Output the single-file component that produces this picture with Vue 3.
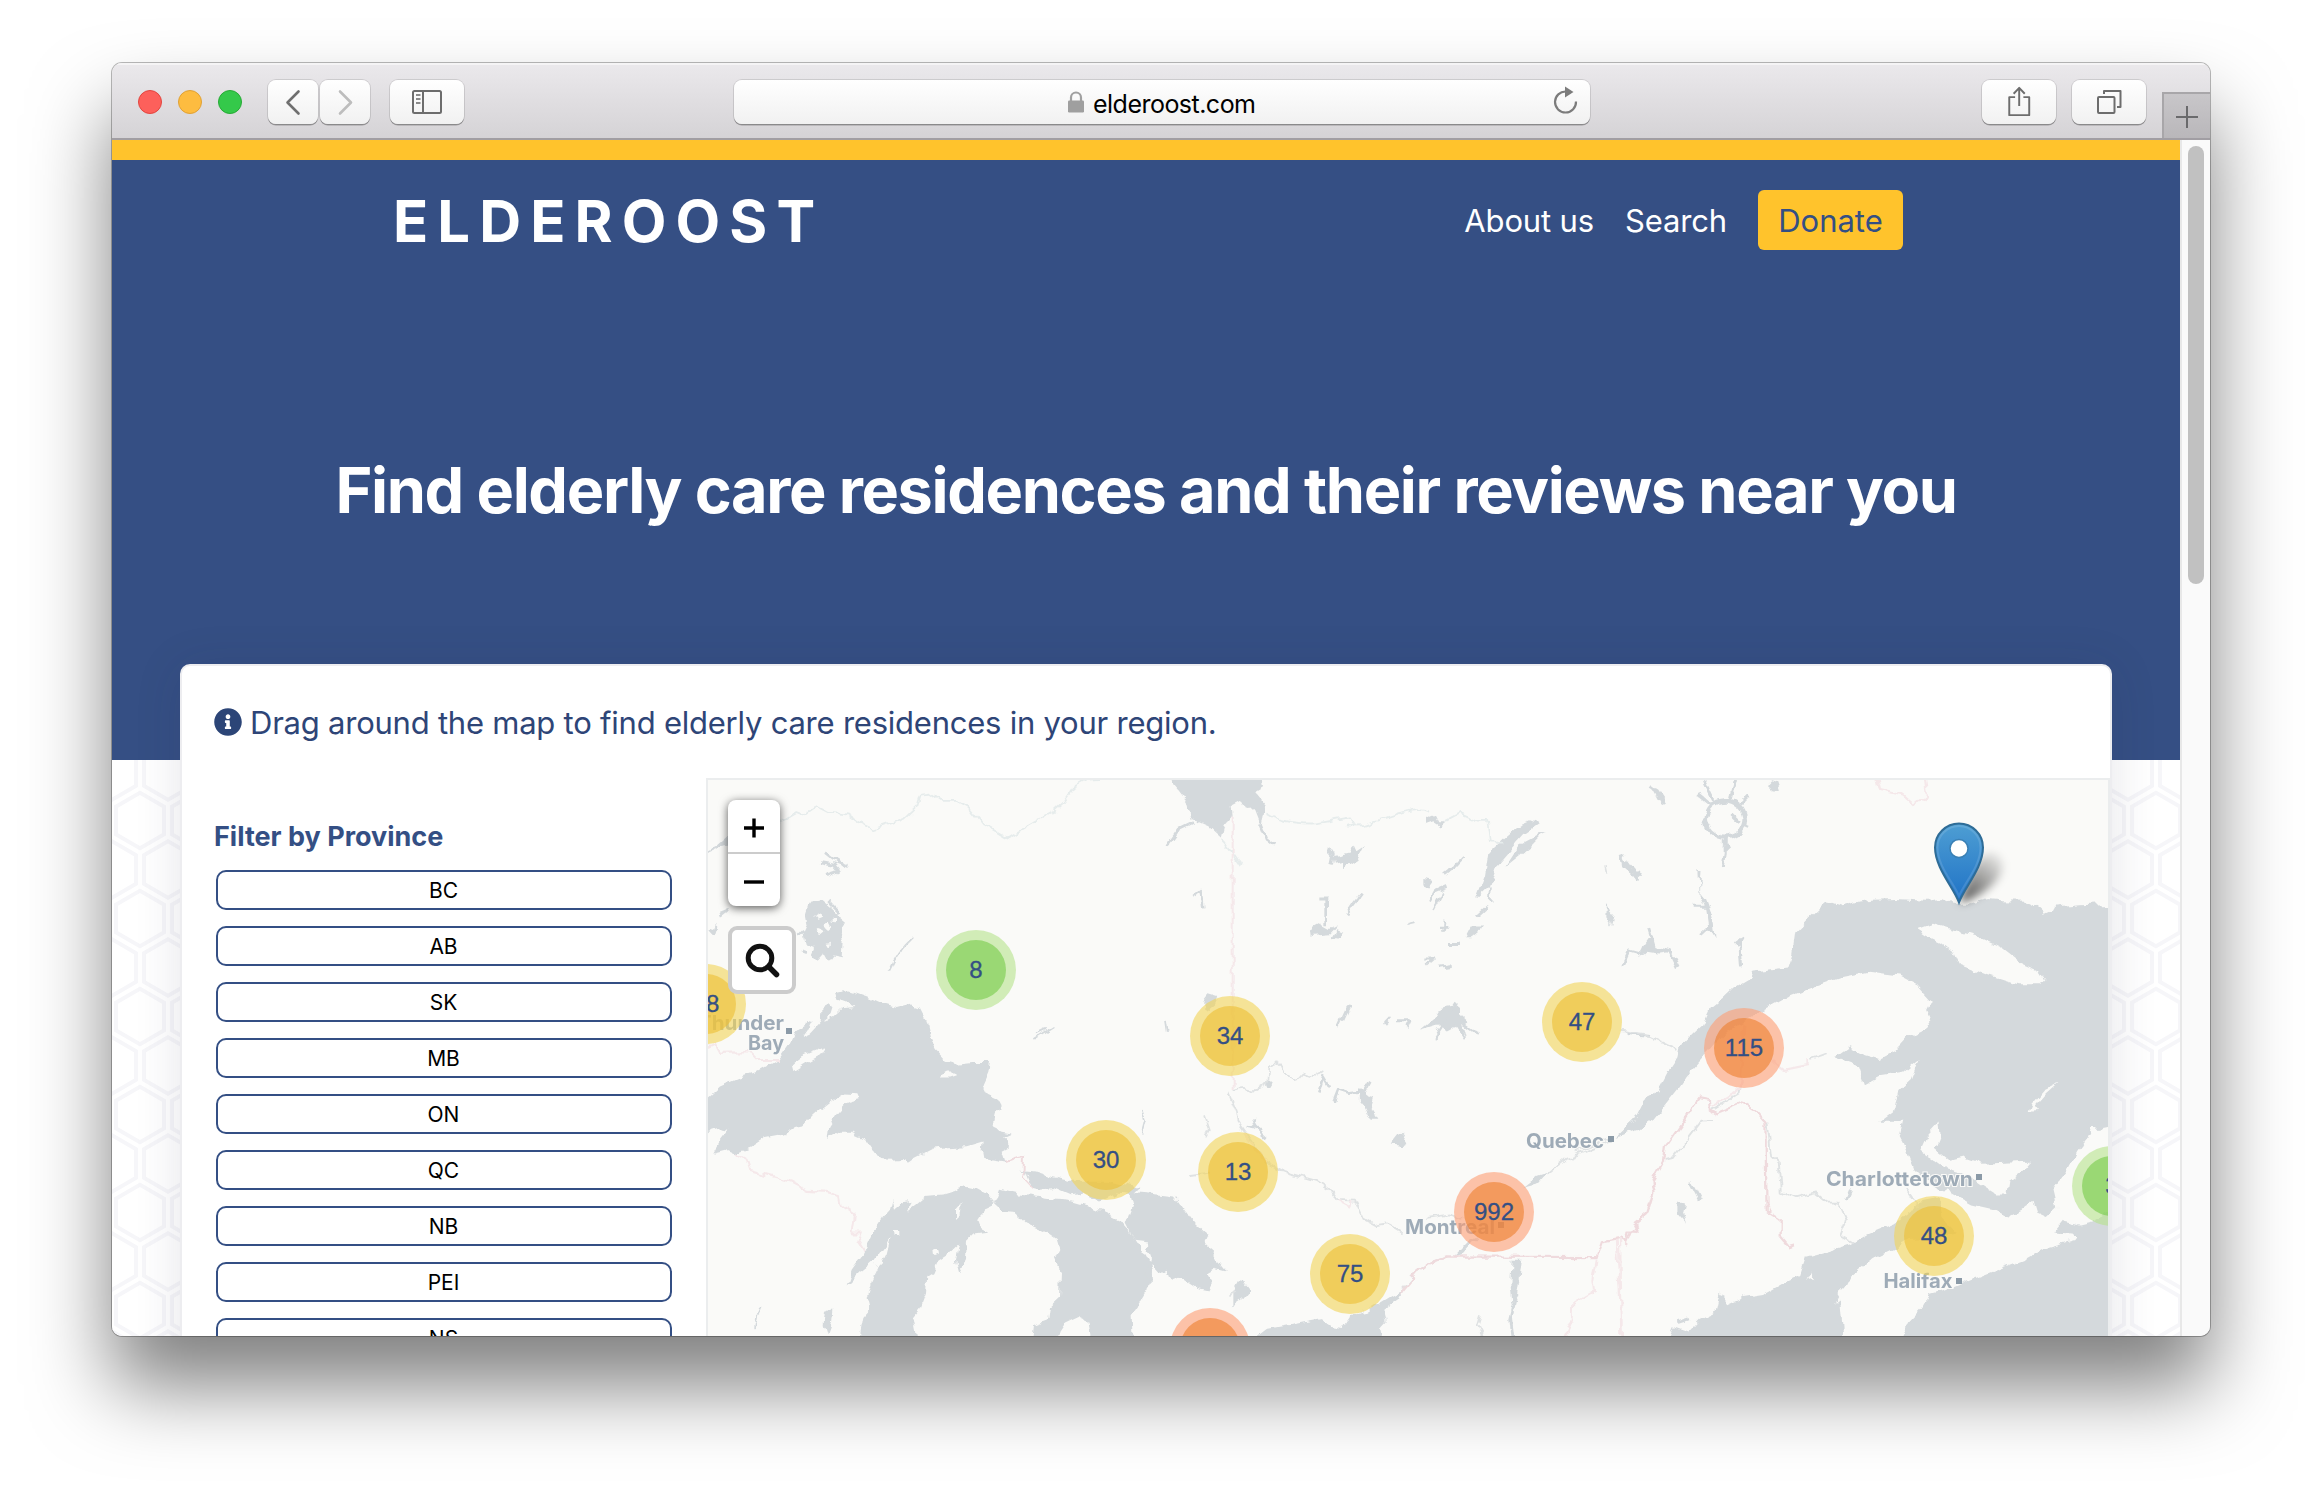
<script setup>
const provinces = ['BC', 'AB', 'SK', 'MB', 'ON', 'QC', 'NB', 'PEI', 'NS']

// Cluster centres in map pixels
const clusters = [
  { n: '18', x: -2, y: 224, size: 'medium' },
  { n: '8', x: 268, y: 190, size: 'small' },
  { n: '34', x: 522, y: 256, size: 'medium' },
  { n: '30', x: 398, y: 380, size: 'medium' },
  { n: '13', x: 530, y: 392, size: 'medium' },
  { n: '75', x: 642, y: 494, size: 'medium' },
  { n: '992', x: 786, y: 432, size: 'large' },
  { n: '47', x: 874, y: 242, size: 'medium' },
  { n: '115', x: 1036, y: 268, size: 'large' },
  { n: '48', x: 1226, y: 456, size: 'medium' },
  { n: '3', x: 1404, y: 406, size: 'small' },
  { n: '', x: 502, y: 568, size: 'large' }
]

const cities = [
  { name: 'Thunder', x: 698, y: 1030, w: 86, dot: [789, 1031] },
  { name: 'Bay', x: 748, y: 1050, w: 36 },
  { name: 'Quebec', x: 1526, y: 1147.5, w: 78, dot: [1611, 1139] },
  { name: 'Montreal', x: 1405, y: 1233.5, w: 90, dot: [1501, 1225] },
  { name: 'Charlottetown', x: 1826, y: 1185.5, w: 147, dot: [1979, 1177] },
  { name: 'Halifax', x: 1883.5, y: 1287.5, w: 69, dot: [1959, 1281] }
]
</script>

<template>
  <div class="desktop">
    <div class="window">
      <div class="toolbar">
        <div class="lights">
          <i class="light red"></i><i class="light amber"></i><i class="light green"></i>
        </div>
        <div class="navs">
          <span class="tb nav-btn">
            <svg width="50" height="44" viewBox="0 0 50 44"><path d="M30.5 11.5 19.5 22.500l11 11" fill="none" stroke="#6f6f6f" stroke-width="2.600" stroke-linecap="round" stroke-linejoin="round" /></svg>
          </span>
          <span class="tb nav-btn">
            <svg width="50" height="44" viewBox="0 0 50 44"><path d="M20 11.500l11 11-11 11" fill="none" stroke="#bdbdbd" stroke-width="2.600" stroke-linecap="round" stroke-linejoin="round" /></svg>
          </span>
        </div>
        <span class="tb side-btn">
          <svg width="74" height="44" viewBox="0 0 74 44" fill="none" stroke="#6d6d6d" stroke-width="2">
            <rect x="23" y="11" width="28" height="22" rx="1.500" />
            <path d="M33 11v22" />
            <path d="M26 15h4.500M26 19h4.500M26 23h4.500" stroke="#8a8a8a" />
          </svg>
        </span>
        <div class="tb address">
          <svg class="lock" width="18" height="22" viewBox="0 0 18 22"><path d="M4 10V6.500a5 5 0 0 1 10 0V10" fill="none" stroke="#a0a0a0" stroke-width="2.200" /><rect x="1" y="9.500" width="16" height="12" rx="1.200" fill="#9f9f9f" /></svg>
          <span class="url">elderoost.com</span>
          <svg class="reload" width="26" height="30" viewBox="0 0 26 30"><path d="M23 16.500A10.500 10.500 0 1 1 13 6.500" fill="none" stroke="#7c7c7c" stroke-width="2.200" /><path d="M12 1.500l8.500 5.500L12 12.500z" fill="#7c7c7c" /></svg>
        </div>
        <span class="tb share-btn">
          <svg width="76" height="44" viewBox="0 0 76 44" fill="none" stroke="#6d6d6d" stroke-width="2" stroke-linejoin="round"><path d="M34 17h-6v18.500h20.500V17h-6" /><path d="M38.200 26V8M32.500 13.500l5.700-6 5.700 6" /></svg>
        </span>
        <span class="tb tabs-btn">
          <svg width="74" height="44" viewBox="0 0 74 44" fill="none" stroke="#6d6d6d" stroke-width="2" stroke-linejoin="round"><rect x="26" y="17" width="16.500" height="16" rx="1" /><path d="M32 14v-3h16.500v16H45" /></svg>
        </span>
        <span class="new-tab">
          <svg width="46" height="46" viewBox="0 0 46 46"><path d="M12 23h22M23 12v22" stroke="#6a6a6c" stroke-width="2" /></svg>
        </span>
      </div>

      <div class="viewport">
        <div class="page">
          <svg class="hex" width="2068" height="1196">
            <defs>
              <pattern id="hexagons" width="28" height="49" patternUnits="userSpaceOnUse" patternTransform="translate(0 534) scale(2)">
                <path fill="#f6f6f9" fill-rule="evenodd" d="M13.990 9.250l13 7.500v15l-13 7.500L1 31.750v-15l12.990-7.500zM3 17.900v12.700l10.990 6.340 11-6.350V17.900l-11-6.340L3 17.900zM0 15l12.980-7.500V0h-2v6.350L0 12.690v2.300zm0 18.500L12.980 41v8h-2v-6.850L0 35.810v-2.300zM15 0v7.500L27.990 15H28v-2.310h-.01L17 6.350V0h-2zm0 49v-8l12.990-7.500H28v2.310h-.01L17 42.150V49h-2z" />
              </pattern>
            </defs>
            <rect width="2068" height="1196" fill="url(#hexagons)" />
          </svg>

          <header class="hero">
            <nav class="nav">
              <span class="logo">ELDEROOST</span>
              <a class="link">About us</a>
              <a class="link">Search</a>
              <a class="donate">Donate</a>
            </nav>
            <h1>Find elderly care residences and their reviews near you</h1>
          </header>

          <main class="card">
            <p class="hint">
              <svg width="28" height="28" viewBox="4 4 504 504"><path fill="#2c4577" d="M256 8C119.043 8 8 119.083 8 256c0 136.997 111.043 248 248 248s248-111.003 248-248C504 119.083 392.957 8 256 8zm0 110c23.196 0 42 18.804 42 42s-18.804 42-42 42-42-18.804-42-42 18.804-42 42-42zm56 254c0 6.627-5.373 12-12 12h-88c-6.627 0-12-5.373-12-12v-24c0-6.627 5.373-12 12-12h12v-64h-12c-6.627 0-12-5.373-12-12v-24c0-6.627 5.373-12 12-12h64c6.627 0 12 5.373 12 12v100h12c6.627 0 12 5.373 12 12v24z" /></svg>
              <span>Drag around the map to find elderly care residences in your region.</span>
            </p>
            <div class="body">
              <aside class="filters">
                <h4>Filter by Province</h4>
                <button v-for="p in provinces" :key="p">{{ p }}</button>
              </aside>

              <div class="map">
                <svg class="tiles" width="1400" height="556" viewBox="708 780 1400 556">
                  <defs>
                    <filter id="coast" x="0" y="0" width="100%" height="100%">
                      <feTurbulence type="fractalNoise" baseFrequency="0.09" numOctaves="2" seed="4" result="n" />
                      <feDisplacementMap in="SourceGraphic" in2="n" scale="9" xChannelSelector="R" yChannelSelector="G" />
                      <feGaussianBlur stdDeviation="0.6" />
                    </filter>
                    <filter id="soft"><feGaussianBlur stdDeviation="0.500" /></filter>
                  </defs>
                  <g filter="url(#coast)">
                    <rect x="700" y="770" width="1420" height="580" fill="#fafaf8" />
                    <!-- Upper Great Lakes -->
                    <g transform="translate(700 770) scale(.33333 .36351)">
                      <g class="water">
                        <path d="M0 915L24 898 60 868 110 848 165 832 205 812 240 792 265 760 285 720 320 700 338 688 325 712 305 735 330 725 365 690 368 650 380 635 398 650 390 675 370 690 400 680 430 655 465 652 440 640 410 630 405 608 430 603 460 612 500 625 540 642 590 655 630 645 660 655 680 690 690 730 710 770 740 800 775 808 820 803 870 803 865 830 848 865 860 888 890 900 905 925 890 950 882 985 905 995 935 1000 910 1010 928 1035 908 1045 920 1080 885 1075 850 1070 845 1045 848 1022 800 1035 740 1038 700 1042 640 1070 625 1080 600 1070 570 1072 540 1070 520 1045 495 1012 455 995 415 995 380 1015 385 980 410 945 440 915 478 905 472 892 430 890 395 910 360 935 335 955 310 980 285 985 255 1003 195 1013 150 1040 105 1057 75 1045 40 1053 60 1020 85 990 60 985 24 995 0 1000Z" />
                        <path d="M330 365L365 358 400 385 415 405 435 420 420 440 428 470 425 515 400 510 385 530 370 505 350 525 335 510 345 490 318 480 310 445 322 420 318 400Z" />
                        <path d="M440 1418L455 1375 490 1330 520 1270 545 1235 570 1210 578 1180 585 1210 610 1190 638 1185 620 1215 650 1195 680 1172 730 1168 765 1158 790 1143 830 1150 860 1165 885 1192 855 1205 835 1235 840 1260 862 1270 820 1275 798 1295 795 1345 775 1382 765 1350 775 1305 740 1335 715 1350 700 1382 682 1392 678 1440 662 1480 640 1505 655 1580H475L490 1505 512 1482 503 1450 515 1410 535 1372 522 1350 510 1360 475 1385Z" />
                        <path d="M885 1192L900 1155 960 1168 1000 1172 1050 1178 1110 1182 1160 1195 1220 1220 1260 1238 1290 1270 1310 1300 1335 1335 1358 1375 1350 1420 1318 1470 1295 1500 1298 1580H1176L1165 1520 1130 1505 1095 1520 1068 1557 1060 1580H995L1002 1525 1045 1510 1050 1475 1080 1450 1083 1380 1065 1340 1078 1315 1070 1290 1030 1265 975 1245 940 1215 910 1213Z" />
                        <path d="M955 1100L1010 1105 1060 1120 1110 1130 1220 1130 1320 1150 1300 1170 1250 1165 1200 1187 1150 1165 1110 1170 1060 1150 1020 1155 1000 1150 985 1115Z" />
                        <path d="M0 222L24 218 50 205 84 178 90 208 50 214 24 225ZM60 390l22-8 5 10-20 14zM24 440l26-14-10 30zM375 1490l22-6-4 40-12 30-10-30z" />
                      </g>
                      <g class="streams">
                        <path d="M375 230L410 255 445 268M360 255L400 262 420 285M375 293L425 278M385 360L415 390M300 500L315 505M310 440L295 455" />
                        <path d="M565 555Q590 500 637 460M1000 740L1060 705M1005 725L1035 712M1325 935L1335 965 1325 1000M1395 690L1400 720M165 1535L172 1500 182 1478" class="fine" />
                        <path d="M240 145L290 118 310 125 350 100 385 117 440 122 480 147 520 163 560 150 620 130 655 100 665 68 690 65 720 85 770 85 810 105 850 150 920 188 1000 145 1060 115 1090 90 1120 50 1160 30 1200 28" class="river" />
                      </g>
                      <g class="land">
                        <path d="M275 810L300 790 340 775 375 763 360 785 320 805 280 828ZM720 840l15-8 30 0 6 8-20 6-28 0zM522 1352L545 1320 572 1285 560 1330 537 1372ZM768 1235l0-25 17-18-2 30zM340 405l18-8 5 12-14 6zM372 425l14-12 8 14-12 10zM352 440l10-6 8 10-10 8zM395 405l10 2 0 12-10-2zM380 475l14-2-6 14zM582 1268l16 0 0 14-14 0zM700 1318l12 0 2 12-12 4z" />
                      </g>
                      <g class="border">
                        <path d="M24 762L45 752 60 778 150 776 170 795 240 795M105 1057L140 1075 150 1102 220 1120 270 1132 325 1158 370 1160 420 1172 425 1195 465 1220 458 1275 485 1275 475 1300 492 1325" />
                        <path d="M918 1078L940 1070 972 1065 970 1120 1000 1150" class="strong" />
                      </g>
                    </g>
                    <!-- Ontario and Quebec -->
                    <g transform="translate(1150 770) scale(.33333 .36351)">
                      <g class="water">
                        <path d="M45 10L80 50 110 85 125 135 175 155 215 188 225 150 248 125 245 100 275 85 290 110 315 108 335 155 345 100 315 65 342 50 335 10Z" />
                        <path d="M-60 1160L0 1165 75 1173 95 1200 130 1245 160 1270 178 1280 165 1305 190 1325 205 1355 228 1380 195 1372 170 1385 188 1410 175 1432 140 1425 90 1395 60 1405 50 1375 30 1385 5 1360 5 1410 -15 1395 0 1345 -10 1320 0 1300 -45 1295 -70 1250 -50 1200Z" />
                        <path d="M290 1580L350 1538 430 1525 515 1510 545 1530 575 1535 600 1500 650 1490 665 1480 720 1450 760 1430 745 1455 700 1485 710 1520 690 1540 700 1580Z" />
                        <path d="M250 1475l0-38 20-35 28 33-18 20zM1510 895L1480 910 1450 965 1410 1000 1390 1010 1415 1005 1460 990 1510 962ZM1120 1147l40-28 28-8-20 22-34 8zM985 1285l-30 12-42 40 25-5z" />
                        <path d="M978 355L1005 290 1015 230 1060 190 1110 150 1140 138 1168 148 1120 178 1075 225 1040 262 1020 320ZM1068 265L1110 205 1187 168 1140 212Z" />
                        <path d="M550 240l50-10 10-25 10 20 25-15-20 35-45 25-5-20-20 5zM480 440l30-15 30 15 22-10-20 22-60 5zM545 465l15-25 20 8-25 18zM945 460l20-35 30 0-10 20-20 15zM810 715l40-30 20-30 60-10 0 30 25 20-15 5 10 35-30-30-30 15-25-20zM625 880l30 20 20 5-10 30 20 30-20 0-20-35-18-20zM820 300l30 5-15 18-15-5zM825 135l30-12 10 18 20 0-15 12-20-12-25 8zM725 1030l30-35 20 30-20 10zM160 635l15-18 30 8-10 20-20 15-15-5zM345 860l32 0-10 15-15 0zM1085 1350l30 0-6 50-8 50-14 20-6-60zM1368 365l10 25 10 10-8 25-14-20z" />
                      </g>
                      <g class="streams">
                        <path d="M130 145L85 165 50 210M530 355L530 430M505 355L535 355M588 400L610 370 635 340M535 215L550 235 545 260M290 980L320 985 350 1010M310 955L320 990M130 350L155 330 160 375M330 150L345 185 375 207M1415 230L1420 265 1450 290 1480 280M1440 260L1470 290M1095 1460L1082 1510 1090 1570M885 285L915 265 940 240M980 405L1010 380M1025 320L1020 360M820 520L850 520 825 540M870 540L905 535M870 430L895 430M885 415L880 445M775 425L800 420M900 480L925 480M565 710L590 660 603 650M705 695L720 680M735 690L780 690 770 710M835 360L850 335 890 320M850 385L880 335M505 890L520 840 540 870M550 915L565 880 600 890 640 885 658 855M920 640L850 740M930 690L990 728M910 690L945 740M1430 725L1500 730" />
                        <path d="M350 118Q400 150 500 147L600 130 615 150 590 153 640 152 760 115Q810 100 840 115M885 140L930 118 985 140 1015 140 1023 200 1060 200M215 188L245 225 275 265" class="river" />
                        <path d="M250 880Q280 868 315 882L355 860 358 820Q380 790 400 830L440 855 460 835 490 845 520 828M235 885L260 940 265 970 350 1080 400 1105 500 1130 540 1155 560 1180 615 1182 640 1235 680 1255 715 1250 755 1272M120 1112L180 1105M395 1105L350 1080M755 1430L800 1385 850 1350 890 1338M830 1235L900 1225 940 1235M1385 1020L1250 1070 1190 1115M1385 1010L1280 1050M990 1500L980 1530 995 1557M165 950L180 990 170 1008M1365 265L1370 285M235 1445L260 1435" class="river dark" />
                      </g>
                      <g class="border">
                        <path d="M248 125V880M280 1000L350 1080M560 1180L600 1200 605 1180M1340 1345L1330 1400 1335 1430 1270 1465 1268 1510 1240 1570M1400 1290L1410 1450 1415 1570" />
                        <path d="M750 1440L800 1385 850 1350 890 1338 1340 1340 1355 1300 1410 1290 1430 1300 1445 1265 1460 1270 1455 1245 1490 1220 1500 1190" class="strong" />
                      </g>
                    </g>
                    <!-- Gulf of St. Lawrence and the Maritimes -->
                    <g transform="translate(1620 770) scale(.38265 .36351)">
                      <g class="water">
                        <path d="M0 1005L20 980 50 950 65 905 95 890 125 830 150 790 155 765 185 730 215 700 235 655 270 625 300 595 340 570 345 555 440 543 450 510 458 450 490 415 530 375 545 362 580 375 620 362 660 357 720 355 800 360 840 355 870 368 910 368 960 355 1000 358 1060 360 1090 375 1110 393 1140 378 1200 372 1300 368V980L1255 990 1240 972 1225 1010 1195 1050 1170 1100 1130 1155 1140 1200 1110 1230 1090 1220 1080 1185 1050 1210 1015 1228 980 1210 920 1195 860 1160 830 1150 800 1130 770 1100 755 1060 745 1030 730 1000 738 965 675 965 720 930 730 880 760 850 780 795 740 830 680 840 640 862 625 815 560 790 600 760 640 785 675 795 720 770 750 735 800 710 812 690 800 660 812 635 775 590 730 565 650 555 580 570 500 600 440 625 380 660 330 690 280 720 220 790 170 850 150 880 90 960 50 990Z" />
                        <path d="M120 1580L140 1530 180 1545 210 1510 250 1490 260 1440 280 1470 320 1450 380 1440 430 1410 470 1390 485 1340 520 1330 600 1305 650 1275 720 1245 760 1215 780 1185 830 1175 840 1230 880 1275 820 1285 760 1290 720 1315 660 1345 600 1395 575 1450 585 1580Z" />
                        <path d="M725 1580L750 1520 790 1475 805 1445 840 1435 900 1410 960 1385 1060 1345 1110 1315 1195 1290 1180 1275 1135 1272 1160 1240 1200 1250 1240 1240 1300 1205V1580Z" />
                        <path d="M385 40l10-12 15 5 8 25-20-5zM205 275l8 0-4 60 16 20 20 60 5 48-20-35-8-55-14-30zM60 490l20-30 10 25 40 15-30 5-30-5-20 12zM150 1190l20 5-5 25 10 28-25-30zM80 50l15 0 25 40-15 8z" />
                      </g>
                      <g class="streams">
                        <circle cx="275" cy="135" r="51" stroke-width="12" />
                        <path d="M275 190L275 225 270 270M235 95L200 65M245 85L220 30M290 80L302 30M315 95L338 70M320 150L338 158M265 195L285 215M290 125L310 145M0 235L25 280 60 285M15 250L50 300M5 540L25 495 60 505 80 485 130 500 150 543M90 490L75 435M310 465L315 540M300 480L320 465M210 455L235 430M105 70L75 45M185 1135L210 1185M590 1180L600 1155M245 1510L270 1450M290 1500L320 1450M150 1520L180 1510M345 1470L380 1440M190 375L225 375" />
                        <path d="M0 718L60 725 100 745 150 770M385 970L395 1060 415 1080 420 1160 460 1178 510 1165 540 1190 570 1190 590 1240 575 1280 610 1300M240 935L310 890 315 860M245 960L215 962 140 1065 120 1070M750 1155L780 1200M500 795L545 778" class="river dark" />
                      </g>
                      <g class="land">
                        <path d="M775 438L815 423 860 437 940 460 1000 490 1050 530 1095 550 1112 578 1100 592 1040 592 960 565 885 535 870 500 840 475 800 455Z" />
                        <path d="M835 970L838 1010 825 1045 860 1075 900 1065 950 1083 1020 1080 1072 1078 1050 1105 1015 1130 1010 1165 980 1165 950 1145 900 1110 850 1095 825 1075 785 1045 800 1010ZM487 1405l12-28 14 28-12-5zM560 1470l15-35 40-40 45-22-40 38-35 35z" />
                        <path d="M1145 862L1130 870 1108 882 1078 918 1070 940 1095 938 1085 925 1110 895Z" />
                      </g>
                      <g class="border">
                        <path d="M670 10L680 55 740 70 770 98 802 70 795 10M325 700L315 860 310 880 240 925M400 800L430 825 490 812 490 795M0 1285L5 1580" />
                        <path d="M0 1285L15 1300 20 1270 45 1270 35 1250 75 1215 90 1160 85 1130 115 1075 120 1035 210 900 232 905 235 935 250 945 320 915 350 935 380 970 383 1210 420 1235 420 1285 440 1310 460 1305" class="strong" />
                      </g>
                    </g>
                  </g>
                  <g class="labels" filter="url(#soft)">
                    <g v-for="c in cities" :key="c.name">
                      <text :x="c.x" :y="c.y" :textLength="c.w" lengthAdjust="spacingAndGlyphs">{{ c.name }}</text>
                      <rect v-if="c.dot" :x="c.dot[0] - 3" :y="c.dot[1] - 3" width="6" height="6" />
                    </g>
                  </g>
                </svg>

                <div v-for="c in clusters" :key="c.n" class="cluster" :class="c.size" :style="{ left: c.x - 40 + 'px', top: c.y - 40 + 'px' }">
                  <span>{{ c.n }}</span>
                </div>

                <svg class="pin" width="130" height="100" viewBox="0 0 130 100">
                  <defs>
                    <linearGradient id="pinFill" x1="0" y1="0" x2="0" y2="1">
                      <stop offset="0" stop-color="#4e9ed3" />
                      <stop offset="1" stop-color="#1f72c6" />
                    </linearGradient>
                    <linearGradient id="pinShade" x1="0" y1="1" x2="0.700" y2="0">
                      <stop offset="0" stop-color="#000" stop-opacity=".7" />
                      <stop offset="1" stop-color="#000" stop-opacity=".1" />
                    </linearGradient>
                    <filter id="pinBlur" x="-30%" y="-30%" width="160%" height="160%"><feGaussianBlur stdDeviation="4.500" /></filter>
                  </defs>
                  <path d="M36 83C42 62 50 40 64 33c16-1 19 16 8 28C62 72 48 80 36 83z" fill="url(#pinShade)" filter="url(#pinBlur)" />
                  <path d="M35 82.500C30 68 11 48 11 27.500a24 24 0 0 1 48 0C59 48 40 68 35 82.500z" fill="url(#pinFill)" stroke="#2e6c97" stroke-width="2" />
                  <path d="M35 76C29 62 13.500 46 13.500 27.500a21.500 21.500 0 0 1 43 0C56.500 46 41 62 35 76z" fill="none" stroke="#fff" stroke-opacity=".12" stroke-width="2" />
                  <circle cx="35" cy="28.500" r="9" fill="#fff" stroke="#3a80b5" stroke-width="1.500" />
                </svg>

                <div class="zoom">
                  <span><svg width="20" height="20" viewBox="0 0 20 20"><path d="M0 10h20M10 0.500v19" stroke="#000" stroke-width="3.400" /></svg></span>
                  <span><svg width="20" height="20" viewBox="0 0 20 20"><path d="M0 10h20" stroke="#000" stroke-width="3.400" /></svg></span>
                </div>
                <div class="search">
                  <svg width="60" height="60" viewBox="0 0 60 60" fill="none" stroke="#111"><circle cx="28" cy="28" r="11.800" stroke-width="5" /><path d="M37 37l7.500 7.500" stroke-width="5.500" stroke-linecap="round" /></svg>
                </div>
              </div>
            </div>
          </main>
        </div>
        <div class="scrollbar"><i></i></div>
      </div>
    </div>
  </div>
</template>

<style>
html, body { margin: 0; background: #fff; overflow: hidden; }
</style>

<style scoped>
.desktop {
  width: 2322px;
  height: 1496px;
  box-sizing: border-box;
  padding: 63px 112px 160px;
  overflow: hidden;
  font-family: Inter, "Liberation Sans", sans-serif;
}
.window {
  width: 2098px;
  height: 1273px;
  border-radius: 10px;
  overflow: hidden;
  background: #fff;
  box-shadow: 0 0 0 1px rgba(0, 0, 0, 0.27), 0 50px 80px rgba(0, 0, 0, 0.5);
}
.toolbar {
  display: flex;
  align-items: flex-start;
  height: 77px;
  box-sizing: border-box;
  padding: 17px 0 0 26px;
  border-bottom: 2px solid #a19ea3;
  background: linear-gradient(#ebe9ec, #d5d3d6);
  box-shadow: inset 0 2px 0 #f5f4f5;
}
.lights { display: flex; gap: 16px; padding-top: 10px; width: 130px; }
.light { width: 24px; height: 24px; border-radius: 50%; box-sizing: border-box; border: 1px solid; }
.red { background: #fd605b; border-color: #e2453f; }
.amber { background: #fdbc40; border-color: #e0a135; }
.green { background: #34c94a; border-color: #27aa35; }
.tb {
  height: 44px;
  border-radius: 8px;
  background: linear-gradient(#fff, #f1f1f1);
  box-shadow: 0 0 0 1px rgba(0, 0, 0, 0.11), 0 1.500px 0 rgba(0, 0, 0, 0.28);
  display: flex;
}
.navs { display: flex; gap: 2px; }
.nav-btn { width: 50px; }
.side-btn { width: 74px; margin-left: 20px; }
.address { width: 856px; margin-left: 270px; align-items: center; position: relative; }
.lock { margin-left: 333px; margin-top: -1px; }
.url { margin-left: 8px; font-size: 25px; letter-spacing: -0.52px; color: #000; margin-top: 3px; }
.reload { position: absolute; right: 11px; top: 5px; }
.share-btn { width: 74px; margin-left: 392px; }
.tabs-btn { width: 74px; margin-left: 16px; }
.new-tab {
  width: 46px;
  height: 44px;
  margin-left: 16px;
  margin-top: 12px;
  border-left: 2px solid #a8a6a9;
  border-top: 2px solid #a8a6a9;
  background: linear-gradient(#c8c6c9, #b9b7ba);
}
.viewport { display: flex; height: 1196px; }
.page { width: 2068px; height: 1196px; overflow: hidden; position: relative; background: #fff; }
.hex { position: absolute; left: 0; top: 0; }
.hero {
  position: relative;
  height: 620px;
  box-sizing: border-box;
  border-top: 20px solid #ffc32c;
  background: #354f84;
  color: #fff;
  padding-top: 30px;
}
.nav { display: flex; align-items: center; height: 60px; padding: 0 277px 0 281px; }
.logo { font-size: 58px; font-weight: 700; letter-spacing: 9.100px; margin-right: auto; padding-top: 2px; }
.link { font-size: 31px; margin-right: 31px; letter-spacing: -0.150px; }
.donate {
  width: 145px;
  height: 60px;
  line-height: 61px;
  border-radius: 6px;
  background: #ffc32c;
  color: #344f84;
  font-size: 31px;
  text-align: center;
}
h1 {
  margin: 202px 0 0;
  line-height: 76px;
  font-size: 63px;
  font-weight: 700;
  letter-spacing: -1.360px;
  text-align: center;
  white-space: nowrap;
}
.card {
  position: relative;
  width: 1928px;
  height: 900px;
  margin: -96px 0 0 68px;
  border: 2px solid #ededf0;
  border-radius: 10px;
  background: #fff;
  box-shadow: 0 4px 48px rgba(40, 42, 70, 0.12);
}
.hint {
  display: flex;
  align-items: center;
  margin: 0;
  padding: 35px 0 35px 32px;
  height: 42px;
  color: #2e4577;
  font-size: 31px;
  letter-spacing: -0.230px;
}
.hint svg { margin-right: 8px; }
.body { display: flex; }
.filters { width: 524px; box-sizing: border-box; padding: 41px 32px 0 32px; height: 780px; }
h4 { margin: 0 0 15px; line-height: 36px; font-size: 27px; font-weight: 700; color: #344f84; }
.filters button {
  display: block;
  width: 456px;
  height: 40px;
  margin: 0 2px 16px;
  padding: 0 1px 0 0;
  border: 2px solid #344f84;
  border-radius: 10px;
  background: #fff;
  color: #000;
  font: 21px Inter, sans-serif;
}
.map {
  position: relative;
  width: 1400px;
  height: 700px;
  border: 2px solid #ebedee;
  overflow: hidden;
  background: #fafaf8;
}
.tiles { display: block; }
.water path { fill: #d4d9dc; }
.land path { fill: #fafaf8; }
.streams { fill: none; stroke: #d4d9dc; stroke-width: 8; stroke-linejoin: round; }
.fine, .river { stroke-width: 5; }
.river { stroke: #e6ecec; }
.dark { stroke: #dfe2e3; }
.border path { fill: none; stroke: #f5e8ea; stroke-width: 6; }
.border .strong { stroke: #efdadd; }
.labels text { font-family: Inter, sans-serif; font-weight: 700; font-size: 20px; fill: #9eabb7; stroke: #fafaf8; stroke-width: 2px; paint-order: stroke; }
.labels rect { fill: #8b9aa7; }
.cluster {
  position: absolute;
  width: 80px;
  height: 80px;
  border-radius: 50%;
}
.cluster span {
  display: block;
  width: 60px;
  height: 60px;
  margin: 10px;
  border-radius: 50%;
  line-height: 60px;
  text-align: center;
  color: #344f84;
  font-family: "Liberation Sans", Arial, sans-serif;
  font-size: 24px;
  -webkit-text-stroke: 0.3px #344f84;
}
.small { background: rgba(181, 226, 140, 0.6); }
.small span { background: rgba(116, 203, 71, 0.6); }
.medium { background: rgba(241, 211, 87, 0.6); }
.medium span { background: rgba(237, 190, 52, 0.6); }
.large { background: rgba(253, 156, 115, 0.6); }
.large span { background: rgba(237, 127, 45, 0.6); }
.pin { position: absolute; left: 1216px; top: 40px; }
.zoom {
  position: absolute;
  left: 20px;
  top: 20px;
  width: 52px;
  border-radius: 8px;
  background: #fff;
  box-shadow: 0 2px 10px rgba(0, 0, 0, 0.65);
}
.zoom span { display: flex; height: 52px; align-items: center; justify-content: center; box-sizing: border-box; padding-top: 4px; }
.zoom span:first-child { border-bottom: 2px solid #ccc; height: 54px; }
.zoom span:last-child { padding-top: 3px; }
.search {
  position: absolute;
  left: 20px;
  top: 146px;
  width: 60px;
  height: 60px;
  border: 4px solid #ccc;
  border-radius: 9px;
  background: #fff;
}
.scrollbar {
  width: 30px;
  box-sizing: border-box;
  border-left: 2px solid #e8e8e8;
  background: #fafafa;
  padding: 6px 0 0 6px;
}
.scrollbar i { display: block; width: 16px; height: 438px; border-radius: 8px; background: #c1c1c1; }
</style>
